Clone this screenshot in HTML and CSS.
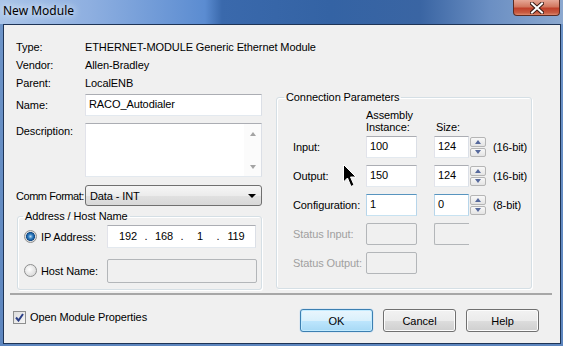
FILE: index.html
```html
<!DOCTYPE html>
<html lang="en">
<head>
  <meta charset="UTF-8">
  <title>New Module</title>
  <link rel="stylesheet" href="styles.css">
</head>
<body>
  <div class="window">
    <div class="titlebar">
      <span class="title">New Module</span>
      <div class="close-btn">
        <svg width="14" height="12" viewBox="0 0 14 12">
          <path d="M2 1.5 L12 10.5 M12 1.5 L2 10.5" stroke="#3a1a14" stroke-width="4" stroke-linecap="square"/>
          <path d="M2 1.5 L12 10.5 M12 1.5 L2 10.5" stroke="#ffffff" stroke-width="2" stroke-linecap="square"/>
        </svg>
      </div>
    </div>

    <div class="client">
      <div class="main">
        <div class="left-col">
          <div class="info-row"><span class="lbl">Type:</span><span>ETHERNET-MODULE Generic Ethernet Module</span></div>
          <div class="info-row"><span class="lbl">Vendor:</span><span>Allen-Bradley</span></div>
          <div class="info-row"><span class="lbl">Parent:</span><span>LocalENB</span></div>

          <div class="field-row name-row">
            <span class="lbl">Name:</span>
            <div class="textbox name-box">RACO_Autodialer</div>
          </div>

          <div class="field-row desc-row">
            <span class="lbl">Description:</span>
            <div class="textbox desc-box">
              <div class="vscroll">
                <span class="tri-up grey"></span>
                <span class="tri-down grey"></span>
              </div>
            </div>
          </div>

          <div class="field-row comm-row">
            <span class="lbl tight">Comm Format:</span>
            <div class="combo">
              <span>Data - INT</span>
              <span class="combo-arrow"></span>
            </div>
          </div>

          <fieldset class="group addr-group">
            <legend>Address / Host Name</legend>
            <div class="addr-row">
              <span class="radio checked"></span>
              <span class="addr-lbl">IP Address:</span>
              <div class="textbox ip-box">
                <span class="octet">192</span><span class="dot">.</span>
                <span class="octet">168</span><span class="dot">.</span>
                <span class="octet">1</span><span class="dot">.</span>
                <span class="octet">119</span>
              </div>
            </div>
            <div class="addr-row">
              <span class="radio"></span>
              <span class="addr-lbl">Host Name:</span>
              <div class="textbox disabled host-box"></div>
            </div>
          </fieldset>
        </div>

        <fieldset class="group conn-group">
          <legend>Connection Parameters</legend>
          <div class="conn-rows">
            <div class="conn-row conn-head">
              <span></span>
              <span class="head-inst">Assembly<br>Instance:</span>
              <span class="head-size">Size:</span>
            </div>
            <div class="conn-row">
              <span>Input:</span>
              <div class="textbox inst-box">100</div>
              <div class="size-cell"><div class="textbox size-box">124</div><div class="spinner"><span><i class="tri-up"></i></span><span><i class="tri-down"></i></span></div></div>
              <span>(16-bit)</span>
            </div>
            <div class="conn-row">
              <span>Output:</span>
              <div class="textbox inst-box">150</div>
              <div class="size-cell"><div class="textbox size-box">124</div><div class="spinner"><span><i class="tri-up"></i></span><span><i class="tri-down"></i></span></div></div>
              <span>(16-bit)</span>
            </div>
            <div class="conn-row">
              <span>Configuration:</span>
              <div class="textbox inst-box hot">1</div>
              <div class="size-cell"><div class="textbox size-box hot">0</div><div class="spinner"><span><i class="tri-up"></i></span><span><i class="tri-down"></i></span></div></div>
              <span>(8-bit)</span>
            </div>
            <div class="conn-row off">
              <span>Status Input:</span>
              <div class="textbox disabled inst-box"></div>
              <div class="size-cell"><div class="textbox disabled size-box cut"></div></div>
              <span></span>
            </div>
            <div class="conn-row off">
              <span>Status Output:</span>
              <div class="textbox disabled inst-box"></div>
              <span></span>
              <span></span>
            </div>
          </div>
        </fieldset>
      </div>

      <div class="separator"></div>

      <div class="bottom-bar">
        <label class="check-item">
          <span class="checkbox">
            <svg width="9" height="9" viewBox="0 0 9 9"><path d="M1 4.5 L3.5 7.5 L8 1" fill="none" stroke="#2b3f86" stroke-width="2"/></svg>
          </span>
          <span>Open Module Properties</span>
        </label>
        <div class="buttons">
          <button class="btn default">OK</button>
          <button class="btn">Cancel</button>
          <button class="btn">Help</button>
        </div>
      </div>
    </div>

    <svg class="cursor" width="14" height="24" viewBox="0 0 14 24">
      <polygon points="0.5,0.5 0.5,18 4.5,14 8,22.5 11,21 7.5,13 13,13" fill="#000" stroke="#fff" stroke-width="1"/>
    </svg>
  </div>
</body>
</html>
```

FILE: styles.css
```css
body {
  margin: 0;
  background: #f0f0f0;
}

.window {
  position: relative;
  width: 563px;
  height: 346px;
  display: flex;
  flex-direction: column;
  background: linear-gradient(to bottom, #6e95c9, #5d86bf);
  overflow: hidden;
}

.titlebar {
  height: 24px;
  display: flex;
  align-items: flex-start;
  background: linear-gradient(to right, #a9c4e8 0, #8eafe0 90px, #5b8cd1 205px, #3a69ac 222px, #3463a4 330px, #3a65a3 420px, #6b8fc3 490px, #8ba8cf 563px);
}

.title {
  margin: 3px 0 0 3px;
  font: 12px/16px "Noto Sans", sans-serif;
  color: #000;
  text-shadow: 0 0 6px #e8f0fa, 0 0 10px #dbe7f7;
}

.close-btn {
  margin-left: auto;
  margin-right: 3px;
  width: 47px;
  height: 16px;
  box-sizing: border-box;
  border: 1px solid #5a2b22;
  border-top: none;
  border-radius: 0 0 4px 4px;
  background: linear-gradient(to bottom, #e6a796 0, #d2775f 45%, #c0402a 55%, #c85c42 85%, #de8a6f 100%);
  display: flex;
  align-items: center;
  justify-content: center;
}

.client {
  flex: 1;
  margin: 0 2px 2px 3px;
  border: 1px solid #1e3456;
  background: #f0f0f0;
  font: 11px "Liberation Sans", Arial, sans-serif;
  letter-spacing: -0.1px;
  color: #000;
  display: flex;
  flex-direction: column;
}

.main {
  height: 268px;
  box-sizing: border-box;
  display: flex;
  align-items: flex-start;
  padding: 13px 0 0 12px;
}

.left-col {
  width: 246px;
  display: flex;
  flex-direction: column;
}

.lbl {
  width: 69px;
  flex: none;
  white-space: nowrap;
}

.lbl.tight {
  letter-spacing: -0.45px;
}

.info-row {
  display: flex;
  height: 18px;
  line-height: 18px;
  white-space: nowrap;
}

.field-row {
  display: flex;
  align-items: center;
}

.name-row { margin-top: 2px; }
.desc-row { margin-top: 7px; align-items: flex-start; }
.desc-row .lbl { line-height: 13px; padding-top: 2px; }
.comm-row { margin-top: 8px; }

.textbox {
  box-sizing: border-box;
  background: #fff;
  border: 1px solid;
  border-color: #abadb3 #dbdfe6 #e3e9ef #e2e3ea;
  height: 22px;
  padding: 0 3px;
  line-height: 18px;
  white-space: nowrap;
}

.textbox.hot {
  border-color: #5794bf #b7d5ea #c7e2f1 #b7d5ea;
}

.textbox.disabled {
  background: #f0f0f0;
  border-color: #b3b6b9;
  border-radius: 2px;
}

.name-box {
  width: 177px;
}

.desc-box {
  width: 177px;
  height: 54px;
  padding: 0;
  display: flex;
  justify-content: flex-end;
}

.vscroll {
  width: 17px;
  display: flex;
  flex-direction: column;
  justify-content: space-between;
  align-items: center;
  padding: 8px 0 7px;
  box-sizing: border-box;
  background: #fbfbfb;
}

.tri-up, .tri-down {
  display: block;
  width: 0;
  height: 0;
  border-left: 3.5px solid transparent;
  border-right: 3.5px solid transparent;
}

.tri-up { border-bottom: 4px solid #56699c; }
.tri-down { border-top: 4px solid #56699c; }
.tri-up.grey { border-bottom-color: #a3a3a3; }
.tri-down.grey { border-top-color: #a3a3a3; }

.combo {
  width: 178px;
  height: 21px;
  box-sizing: border-box;
  border: 1px solid #707070;
  border-radius: 3px;
  background: linear-gradient(to bottom, #f6f6f6 0, #ececec 50%, #e1e1e1 51%, #d8d8d8 100%);
  display: flex;
  align-items: center;
  padding: 0 5px 0 4px;
}

.combo-arrow {
  margin-left: auto;
  width: 0;
  height: 0;
  border-left: 4px solid transparent;
  border-right: 4px solid transparent;
  border-top: 4px solid #000;
}

.group {
  margin: 0;
  border: 1px solid #d5dfe5;
  border-radius: 3px;
  box-shadow: inset 1px 1px 0 #fff, 1px 1px 0 #fff;
  min-width: 0;
}

.group legend {
  line-height: 13px;
  padding: 0 2px;
}

.addr-group {
  margin: 4px 0 0 1px;
  padding: 2px 0 7px 6px;
}

.addr-group legend {
  margin-left: -1px;
}

.addr-row {
  display: flex;
  align-items: center;
  height: 23px;
}

.addr-row + .addr-row {
  margin-top: 11px;
}

.addr-lbl {
  width: 66px;
  margin-left: 4px;
  white-space: nowrap;
}

.radio {
  width: 13px;
  height: 13px;
  box-sizing: border-box;
  border-radius: 50%;
  border: 1px solid #8e8f8f;
  background: radial-gradient(circle at 40% 40%, #ffffff 0, #e9e9e9 45%, #d0d0d0 100%);
}

.radio.checked {
  background: radial-gradient(circle at 50% 50%, #b9d9f3 0, #2e7dc1 30%, #124a86 55%, #dadada 60%, #f4f4f4 100%);
}

.ip-box {
  width: 149px;
  height: 23px;
  display: flex;
  padding: 0 0 0 5px;
  line-height: 20px;
}

.octet {
  width: 30px;
  text-align: center;
}

.dot {
  width: 6px;
  text-align: center;
}

.host-box {
  width: 150px;
  height: 24px;
}

.conn-group {
  margin: 53px 0 0 14px;
  width: 256px;
  height: 198px;
  box-sizing: border-box;
  padding: 4px 0 0 16px;
}

.conn-group legend {
  margin-left: -9px;
}

.conn-rows {
  display: flex;
  flex-direction: column;
  gap: 7px;
}

.conn-row {
  display: grid;
  grid-template-columns: 73px 68px 59px auto;
  align-items: center;
  height: 22px;
  white-space: nowrap;
}

.conn-row.off {
  color: #a0a0a0;
}

.conn-head {
  height: 26px;
  align-items: end;
  margin-bottom: -5px;
}

.head-inst {
  line-height: 12px;
  margin-bottom: 1px;
}

.head-size {
  line-height: 12px;
  margin: 0 0 1px 2px;
}

.inst-box {
  width: 51px;
}

.size-cell {
  display: flex;
}

.size-box {
  width: 35px;
}

.size-box.cut {
  border-right: none;
  border-radius: 2px 0 0 2px;
}

.spinner {
  width: 18px;
  height: 22px;
  display: flex;
  flex-direction: column;
  gap: 1px;
  padding: 1px;
  box-sizing: border-box;
}

.spinner span {
  flex: 1;
  border: 1px solid #b5b5b5;
  border-radius: 2px;
  background: linear-gradient(to bottom, #f8f8f8, #e4e4e4);
  display: flex;
  align-items: center;
  justify-content: center;
}

.separator {
  height: 2px;
  margin: 0 8px 0 6px;
  background: #a7a7a7;
}

.bottom-bar {
  display: flex;
  align-items: flex-start;
  padding: 14px 21px 0 9px;
}

.check-item {
  display: flex;
  align-items: center;
  gap: 4px;
  margin-top: 2px;
  line-height: 13px;
}

.checkbox {
  width: 13px;
  height: 13px;
  box-sizing: border-box;
  border: 1px solid #8e8f8f;
  background: linear-gradient(135deg, #dcdcdc, #f6f6f6);
  display: flex;
  align-items: center;
  justify-content: center;
}

.buttons {
  margin-left: auto;
  display: flex;
  gap: 10px;
}

.btn {
  width: 73px;
  height: 23px;
  box-sizing: border-box;
  border: 1px solid #707070;
  border-radius: 3px;
  background: linear-gradient(to bottom, #f2f2f2 0, #ebebeb 50%, #dddddd 51%, #cfcfcf 100%);
  font: 11px "Liberation Sans", Arial, sans-serif;
  color: #000;
  padding: 0;
  box-shadow: inset 0 0 0 1px #fcfcfc;
}

.btn.default {
  border-color: #3c7fb1;
  background: linear-gradient(to bottom, #eaf6fd 0, #d9f0fc 50%, #bee6fd 51%, #a7d9f5 100%);
  box-shadow: inset 0 0 0 1px #c2ebff, 0 0 1px #48a6f0;
}

.cursor {
  position: absolute;
  left: 343px;
  top: 164px;
}
```
